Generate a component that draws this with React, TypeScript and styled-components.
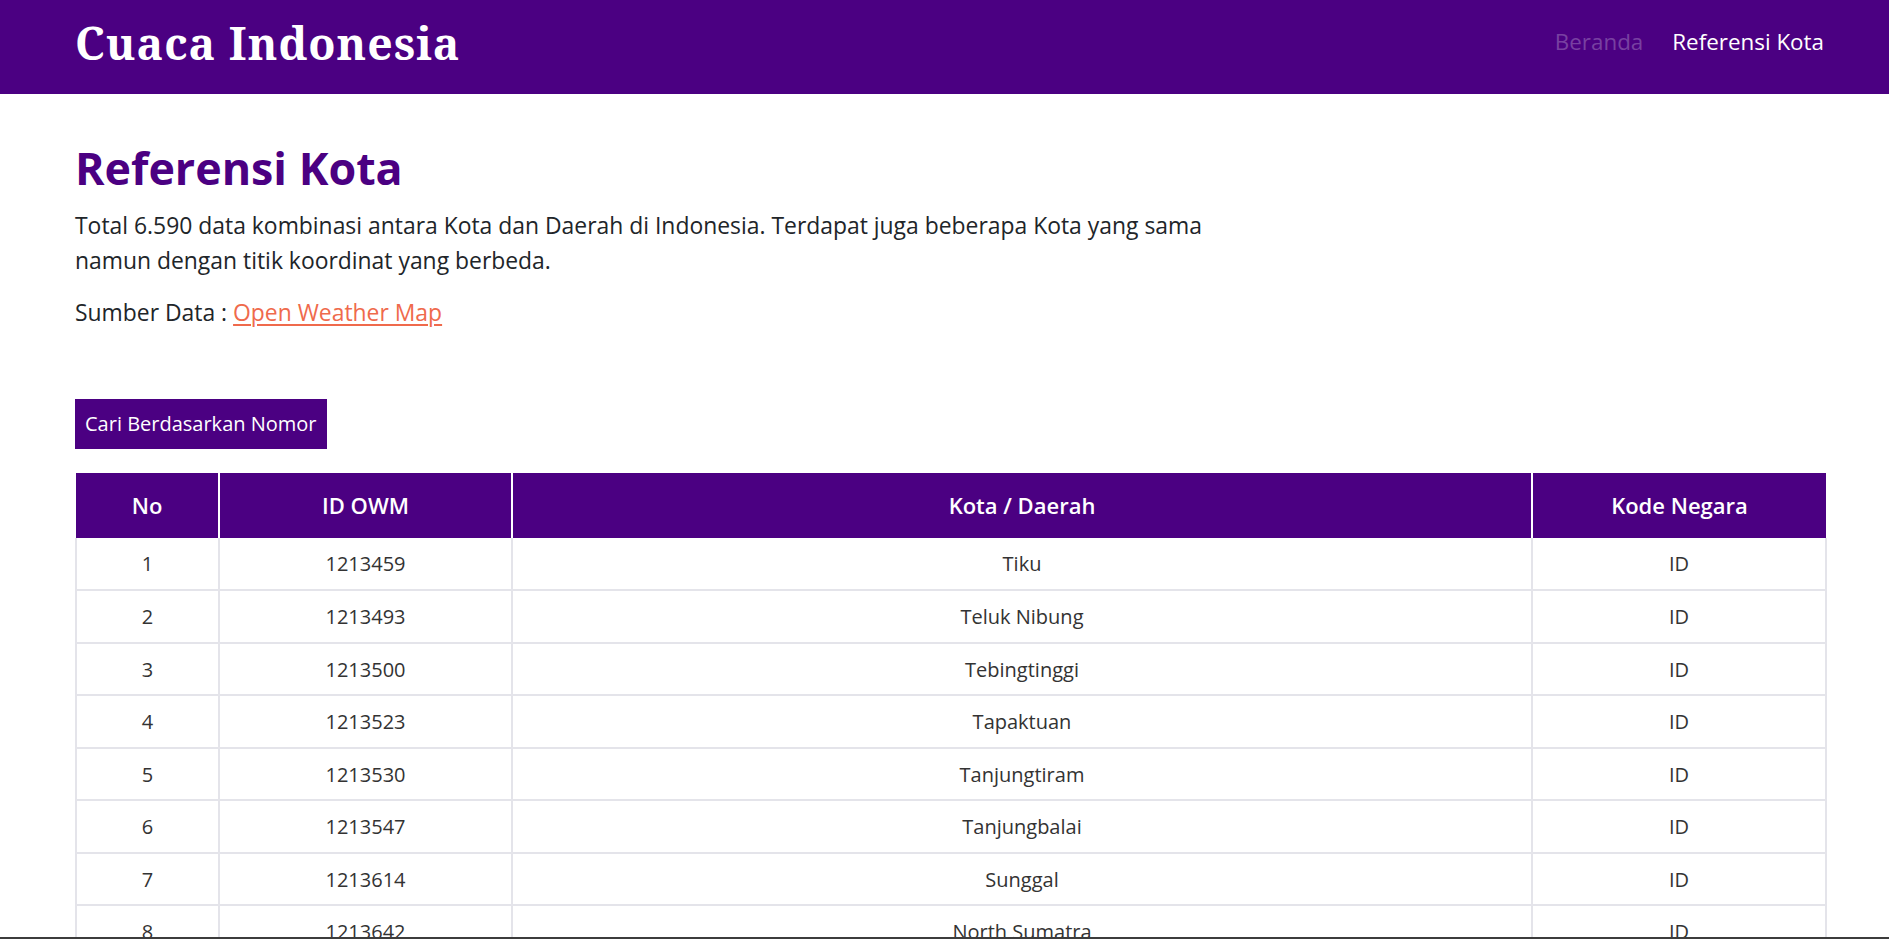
import React from "react";
import styled, { createGlobalStyle } from "styled-components";

const GlobalStyle = createGlobalStyle`
  html, body { margin: 0; padding: 0; background: #ffffff; }
  body { font-family: "Open Sans", "Noto Sans", sans-serif; color: #212529; }
  * { box-sizing: border-box; }
`;

const Navbar = styled.header`
  background: #4b0082;
  height: 94px;
  display: flex;
  align-items: center;
  justify-content: space-between;
  padding: 0 65px 0 75px;
`;

const Brand = styled.a`
  font-family: "Noto Serif", "DejaVu Serif", "Liberation Serif", serif;
  font-weight: 700;
  font-size: 44.5px;
  letter-spacing: 1px;
  color: #ffffff;
  text-decoration: none;
  line-height: 1;
  margin-top: -8px;
`;

const NavLinks = styled.nav`
  display: flex;
  gap: 29px;
  align-items: center;
  padding-bottom: 12px;
`;

const NavLink = styled.a<{ $active?: boolean }>`
  font-family: "Open Sans", sans-serif;
  font-size: 22.4px;
  color: ${(p) => (p.$active ? "#ffffff" : "#7840a1")};
  text-decoration: none;
`;

const Main = styled.main`
  padding: 47px 64px 40px 75px;
`;

const Title = styled.h1`
  font-family: "Open Sans", sans-serif;
  font-weight: 700;
  font-size: 44.8px;
  line-height: 1.2;
  color: #4b0082;
  margin: 0 0 13px 0;
`;

const Lead = styled.p`
  font-size: 22.9px;
  line-height: 35px;
  max-width: 1150px;
  margin: 0 0 17px 0;
`;

const SourceLine = styled.p`
  font-size: 22.9px;
  line-height: 35px;
  margin: 0;
`;

const SourceLink = styled.a`
  color: #ef6a4c;
  text-decoration: underline;
  text-underline-offset: 3px;
`;

const SearchButton = styled.button`
  display: block;
  margin-top: 69px;
  height: 50px;
  padding: 0 10px;
  border: none;
  background: #4b0082;
  color: #ffffff;
  font-family: "Open Sans", sans-serif;
  font-size: 20px;
  cursor: pointer;
`;

const Table = styled.table`
  margin-top: 24px;
  width: 1750px;
  border-collapse: collapse;
  table-layout: fixed;
  font-family: "Open Sans", sans-serif;
`;

const HeadCell = styled.th`
  background: #4b0082;
  color: #ffffff;
  font-weight: 600;
  font-size: 22px;
  height: 65px;
  text-align: center;
  border-left: 2px solid #ffffff;
  &:first-child { border-left: none; }
`;

const Cell = styled.td`
  height: 52.5px;
  text-align: center;
  font-size: 20px;
  color: #333333;
  border: 2px solid #e4e4ea;
  border-top: none;
`;

const BottomEdge = styled.div`
  position: fixed;
  left: 0;
  right: 0;
  bottom: 0;
  height: 2px;
  background: #3c3c3c;
`;

const rows: [number, string, string][] = [
  [1, "1213459", "Tiku"],
  [2, "1213493", "Teluk Nibung"],
  [3, "1213500", "Tebingtinggi"],
  [4, "1213523", "Tapaktuan"],
  [5, "1213530", "Tanjungtiram"],
  [6, "1213547", "Tanjungbalai"],
  [7, "1213614", "Sunggal"],
  [8, "1213642", "North Sumatra"],
  [9, "1213655", "Sibolga"],
  [10, "1213684", "Sidikalang"],
  [11, "1213713", "Sibuhuan"],
  [12, "1213765", "Saribudolok"],
];

export default function App() {
  return (
    <>
      <GlobalStyle />
      <Navbar>
        <Brand href="#">Cuaca Indonesia</Brand>
        <NavLinks>
          <NavLink href="#">Beranda</NavLink>
          <NavLink href="#" $active>
            Referensi Kota
          </NavLink>
        </NavLinks>
      </Navbar>
      <Main>
        <Title>Referensi Kota</Title>
        <Lead>
          Total 6.590 data kombinasi antara Kota dan Daerah di Indonesia. Terdapat juga beberapa Kota yang sama
          namun dengan titik koordinat yang berbeda.
        </Lead>
        <SourceLine>
          Sumber Data : <SourceLink href="#">Open Weather Map</SourceLink>
        </SourceLine>
        <SearchButton>Cari Berdasarkan Nomor</SearchButton>
        <Table>
          <colgroup>
            <col style={{ width: 143 }} />
            <col style={{ width: 293 }} />
            <col style={{ width: 1020 }} />
            <col style={{ width: 294 }} />
          </colgroup>
          <thead>
            <tr>
              <HeadCell>No</HeadCell>
              <HeadCell>ID OWM</HeadCell>
              <HeadCell>Kota / Daerah</HeadCell>
              <HeadCell>Kode Negara</HeadCell>
            </tr>
          </thead>
          <tbody>
            {rows.map(([no, id, name]) => (
              <tr key={no}>
                <Cell>{no}</Cell>
                <Cell>{id}</Cell>
                <Cell>{name}</Cell>
                <Cell>ID</Cell>
              </tr>
            ))}
          </tbody>
        </Table>
      </Main>
      <BottomEdge />
    </>
  );
}
